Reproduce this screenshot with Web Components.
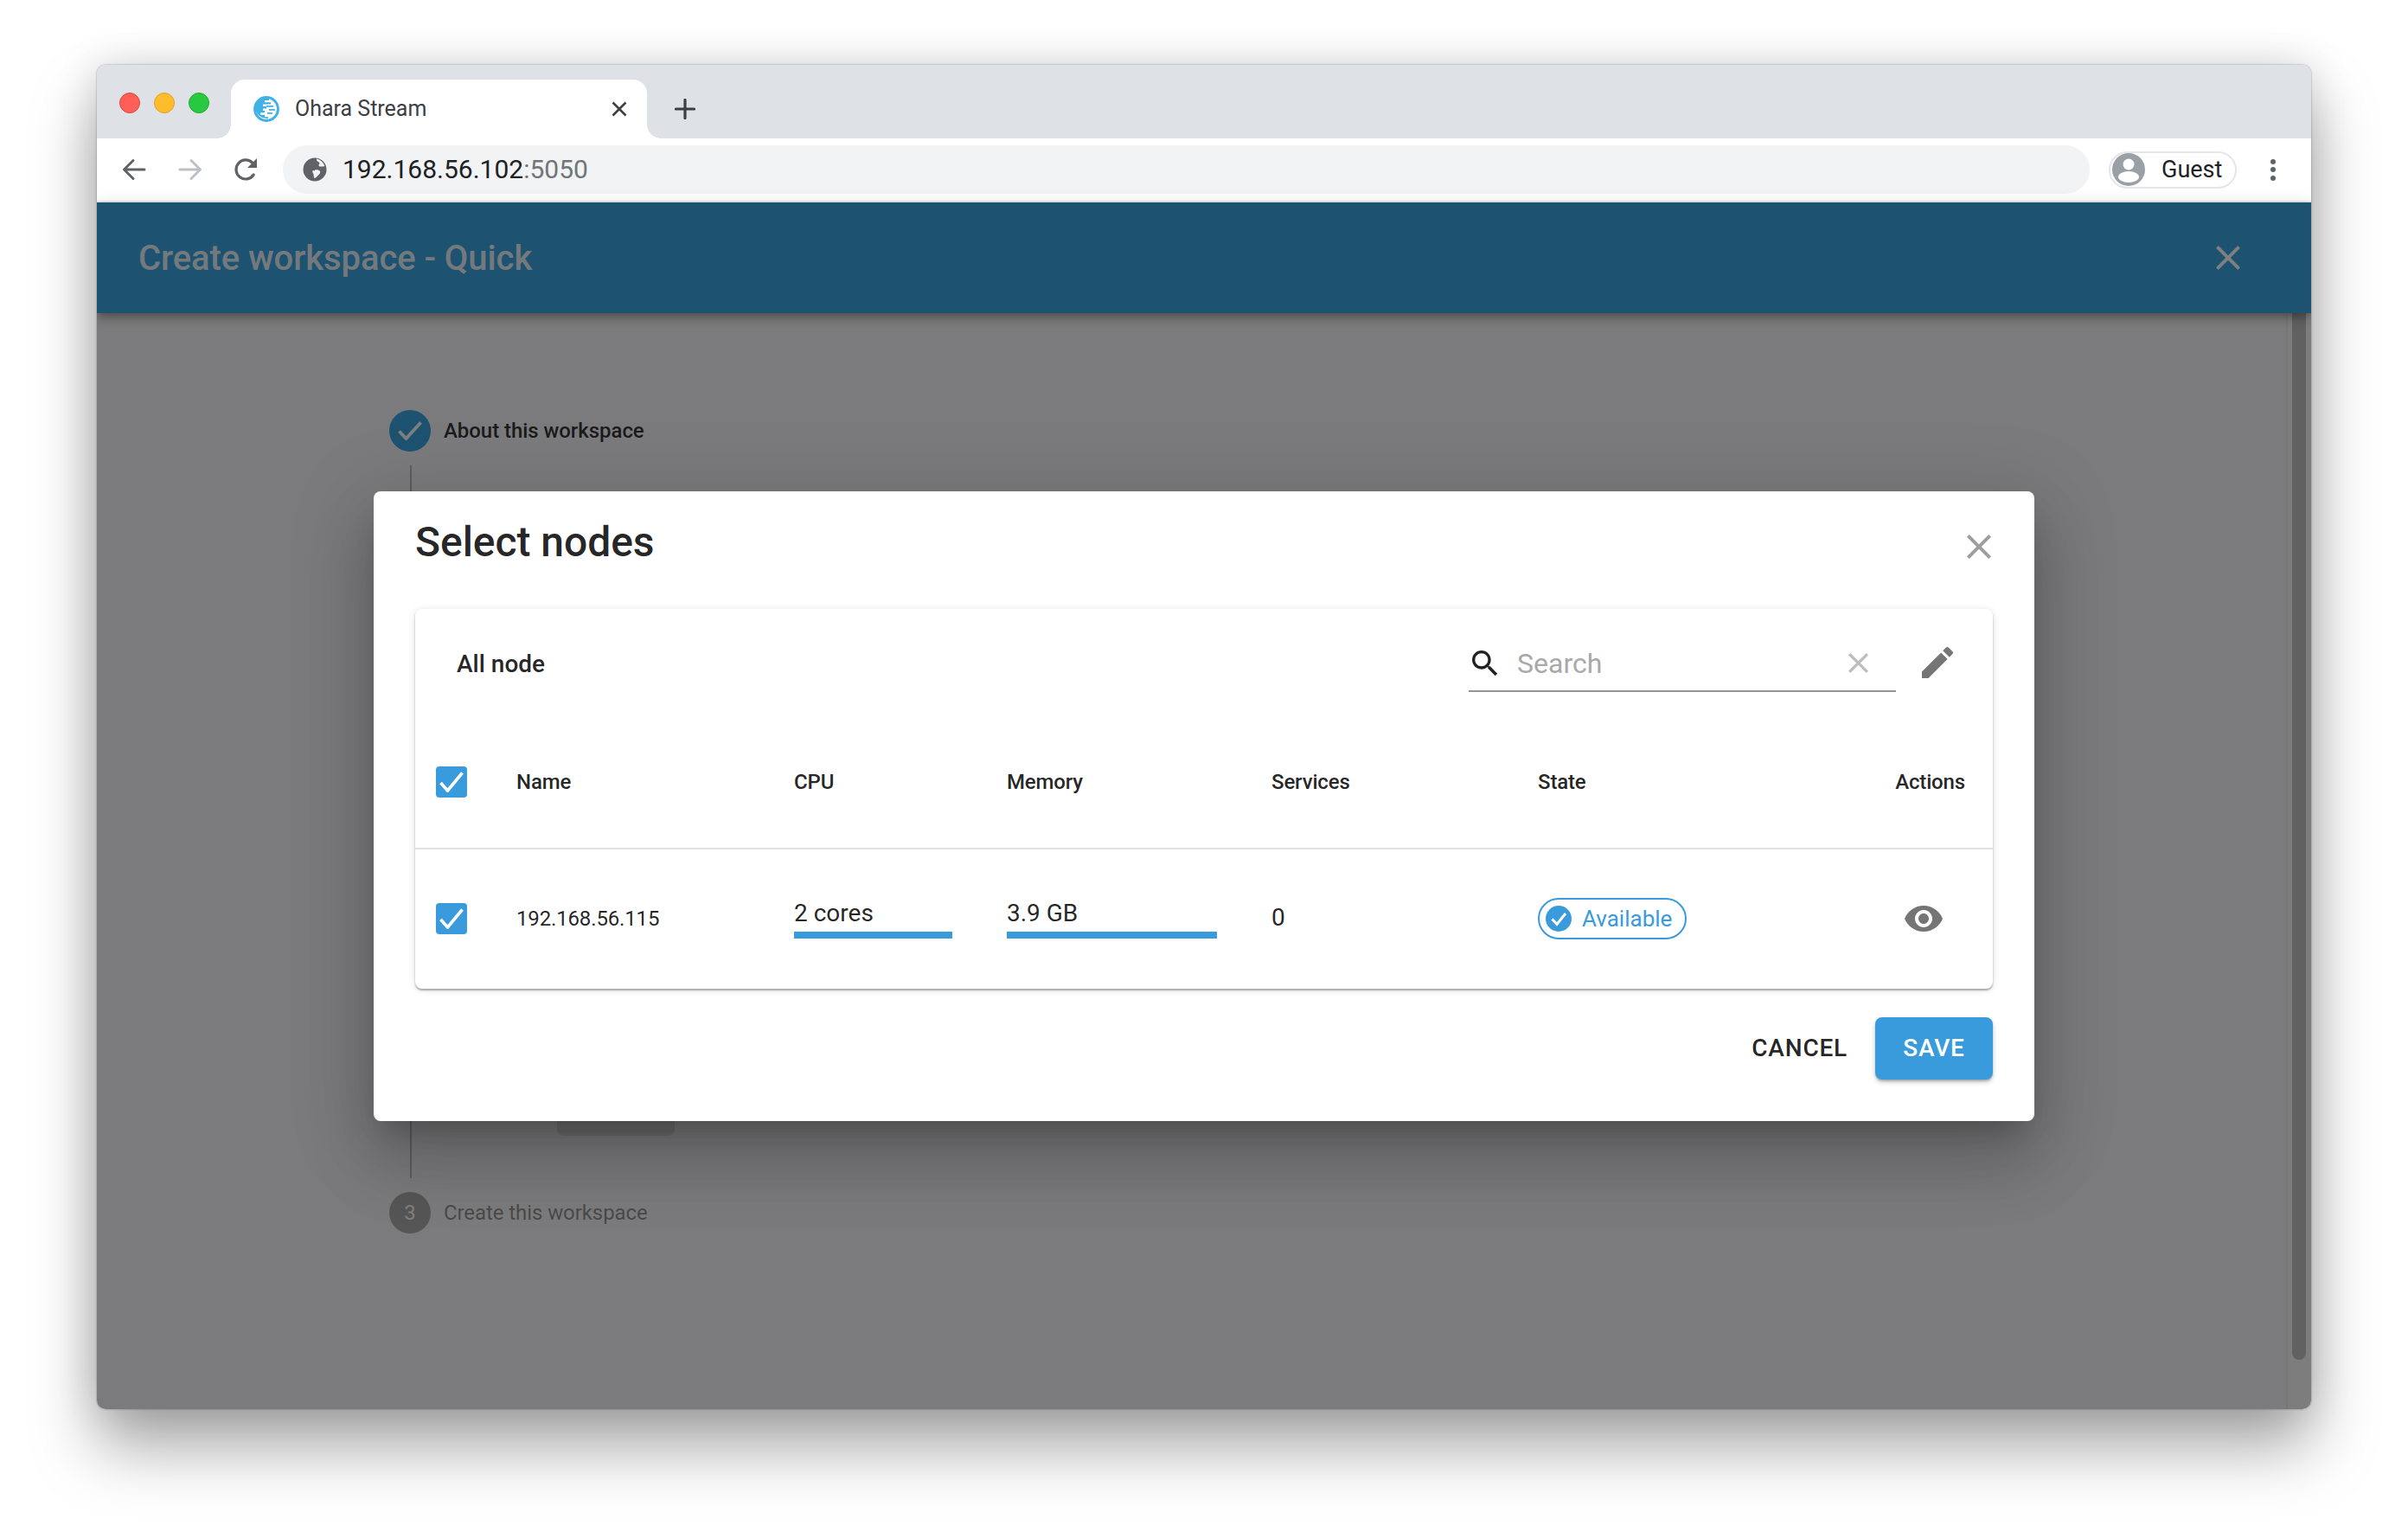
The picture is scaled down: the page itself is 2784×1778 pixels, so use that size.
<!DOCTYPE html>
<html lang="en">
<head>
<meta charset="utf-8">
<title>Ohara Stream</title>
<style>
    html, body { margin: 0; background: #fff; }
    body { padding: 75px 112px 0; height: 1778px; box-sizing: border-box; overflow: hidden; font-family: Roboto, "Liberation Sans", sans-serif; }
</style>
</head>
<body>
<mac-window>
    <tab-strip slot="tabs" label="Ohara Stream"></tab-strip>
    <url-bar slot="toolbar" host="192.168.56.102" port=":5050"></url-bar>
    <app-header heading="Create workspace - Quick"></app-header>
    <workspace-page>
        <step-item state="done" label="About this workspace"></step-item>
        <step-line></step-line>
        <step-item state="todo" number="3" label="Create this workspace"></step-item>
    </workspace-page>
    <modal-dialog slot="overlay" heading="Select nodes">
        <nodes-card>
            <table-row kind="head">
                <check-box></check-box>
                <span>Name</span>
                <span>CPU</span>
                <span>Memory</span>
                <span>Services</span>
                <span>State</span>
                <span>Actions</span>
            </table-row>
            <table-row kind="body">
                <check-box></check-box>
                <span>192.168.56.115</span>
                <usage-bar value="2 cores"></usage-bar>
                <usage-bar value="3.9 GB"></usage-bar>
                <span style="font-size:28px;margin-top:-2px">0</span>
                <state-chip label="Available"></state-chip>
                <eye-button></eye-button>
            </table-row>
        </nodes-card>
        <text-button slot="actions" label="CANCEL"></text-button>
        <text-button slot="actions" label="SAVE" primary></text-button>
    </modal-dialog>
</mac-window>

<script>
const CLOSE_PATH = 'M19 6.41L17.59 5 12 10.59 6.41 5 5 6.41 10.59 12 5 17.59 6.41 19 12 13.41 17.59 19 19 17.59 13.41 12z';

class MacWindow extends HTMLElement {
    constructor() {
        super();
        this.attachShadow({ mode: 'open' });
    }

    connectedCallback() {
        this.shadowRoot.innerHTML = `
        <style>
            :host {
                display: block;
                width: 2560px;
                height: 1554px;
                border-radius: 10px;
                box-shadow: 0 44px 76px rgba(0, 0, 0, 0.34), 0 0 50px rgba(0, 0, 0, 0.14), 0 0 2px rgba(0, 0, 0, 0.45);
            }
            .frame {
                display: flex;
                flex-direction: column;
                height: 100%;
                border-radius: 10px;
                overflow: hidden;
            }
            .view {
                position: relative;
                flex: 1;
                display: flex;
                flex-direction: column;
                min-height: 0;
            }
        </style>
        <div class="frame">
            <slot name="tabs"></slot>
            <slot name="toolbar"></slot>
            <div class="view">
                <slot></slot>
                <slot name="overlay"></slot>
            </div>
        </div>
        `;
    }
}

class TabStrip extends HTMLElement {
    constructor() {
        super();
        this.attachShadow({ mode: 'open' });
    }

    connectedCallback() {
        this.shadowRoot.innerHTML = `
        <style>
            :host {
                display: flex;
                height: 85px;
                background: #dee1e6;
                padding-left: 26px;
                box-sizing: border-box;
            }
            .lights {
                display: flex;
                gap: 16px;
                margin-top: 32px;
            }
            .lights i {
                width: 24px;
                height: 24px;
                border-radius: 50%;
                box-sizing: border-box;
            }
            .tab {
                position: relative;
                display: flex;
                align-items: center;
                width: 481px;
                height: 68px;
                margin: 17px 0 0 25px;
                padding: 0 23px 0 26px;
                box-sizing: border-box;
                background: #fff;
                border-radius: 16px 16px 0 0;
            }
            .tab::before, .tab::after {
                content: '';
                position: absolute;
                bottom: 0;
                width: 16px;
                height: 16px;
            }
            .tab::before {
                left: -16px;
                background: radial-gradient(circle at 0 0, transparent 15.5px, #fff 16px);
            }
            .tab::after {
                right: -16px;
                background: radial-gradient(circle at 100% 0, transparent 15.5px, #fff 16px);
            }
            .title {
                margin: -1px 0 0 18px;
                font-size: 25px;
                color: #3c4043;
            }
            .close {
                margin-left: auto;
            }
            .plus {
                margin: 39px 0 0 32px;
            }
        </style>
        <div class="lights">
            <i style="background:#ff5f57;border:1px solid #e2463f"></i>
            <i style="background:#ffbd2e;border:1px solid #dfa023"></i>
            <i style="background:#28c940;border:1px solid #1dad2b"></i>
        </div>
        <div class="tab">
            <svg width="30" height="30" viewBox="0 0 30 30">
                <circle cx="15" cy="15" r="13.4" fill="#fff" stroke="#3fb0e8" stroke-width="3"/>
                <path d="M2.5 15A12.5 12.5 0 0 1 15 2.5h3v2.4h-5v2.4h7v2.2h-9v2.6h4v2.4h-4v2.6h2v2.2H8v2.4h5v2.6h4v1.6H15A12.5 12.5 0 0 1 2.5 15z" fill="#3fb0e8"/>
                <path d="M15 11h8v1.7h-8zM18 15h7v1.7h-7zM16 19h6v1.7h-6z" fill="#3fb0e8"/>
            </svg>
            <span class="title">${this.getAttribute('label')}</span>
            <svg class="close" width="18" height="18" viewBox="0 0 18 18" fill="none" stroke="#3c4043" stroke-width="2.6"><path d="M1.5 1.5l15 15M16.5 1.5l-15 15"/></svg>
        </div>
        <svg class="plus" width="24" height="24" viewBox="0 0 24 24" fill="none" stroke="#3c4043" stroke-width="3.2" stroke-linecap="round"><path d="M12 1.5v21M1.5 12h21"/></svg>
        `;
    }
}

class UrlBar extends HTMLElement {
    constructor() {
        super();
        this.attachShadow({ mode: 'open' });
    }

    connectedCallback() {
        this.shadowRoot.innerHTML = `
        <style>
            :host {
                display: flex;
                align-items: center;
                height: 74px;
                padding: 0 41px 0 29px;
                box-sizing: border-box;
                background: #fff;
                border-bottom: 2px solid #e8eaed;
            }
            .nav {
                display: flex;
                align-items: center;
                flex-shrink: 0;
            }
            .omni {
                flex: 1;
                display: flex;
                align-items: center;
                height: 56px;
                margin: 0 22px 0 29px;
                padding-left: 23px;
                border-radius: 28px;
                background: #f1f3f4;
                font-size: 30px;
                color: #202124;
            }
            .omni svg { margin-right: 18px; }
            .omni > span { margin-top: -2px; }
            .port { color: #70757a; }
            .guest {
                display: flex;
                align-items: center;
                width: 148px;
                height: 43px;
                box-sizing: border-box;
                padding-left: 2px;
                border: 2px solid #e4e6e9;
                border-radius: 22px;
                font-size: 27px;
                color: #202124;
            }
            .guest span { margin-left: 19px; }
            .dots {
                display: flex;
                flex-direction: column;
                gap: 3.5px;
                margin-left: 39px;
            }
            .dots i {
                width: 6px;
                height: 6px;
                border-radius: 50%;
                background: #5f6368;
            }
        </style>
        <div class="nav">
            <svg width="28" height="26" viewBox="0 0 28 26" fill="none" stroke="#5f6368" stroke-width="3" stroke-linecap="round" stroke-linejoin="round"><path d="M26 13H3M13 2.5L2.5 13 13 23.5"/></svg>
            <svg style="margin-left:37px" width="28" height="26" viewBox="0 0 28 26" fill="none" stroke="#bdc1c6" stroke-width="3" stroke-linecap="round" stroke-linejoin="round"><path d="M2 13h23M15 2.5L25.5 13 15 23.5"/></svg>
            <svg style="margin-left:36px" width="28" height="28" viewBox="0 0 28 28"><path d="M23.2 20A11 11 0 1 1 21.8 6.2" fill="none" stroke="#5f6368" stroke-width="3.2" stroke-linecap="round"/><path d="M27 1v11H16z" fill="#5f6368"/></svg>
        </div>
        <div class="omni">
            <svg width="28" height="28" viewBox="0 0 28 28">
                <circle cx="14" cy="14" r="13.5" fill="#5f6368"/>
                <path d="M14 14.5c2-.8 5-.2 6 1.5 1 1.6-.8 3.4-2 4.6-1.2 1.3-2.6 3-4.5 3.4-1-1.6-.6-3.1-1-4.5-.5-1.7-2-2.7-1-4 .6-.8 1.5-.6 2.5 0z" fill="#f1f3f4"/>
                <path d="M16 1.5c-.5 2 .7 2.8 2 3.4 1.8.8 1.6 2.2.8 3.3-.7 1-.2 2 1 2.2 1.8.3 3.7.1 5.6-.4-1.5-4-5-7.8-9.4-8.5z" fill="#f1f3f4"/>
            </svg>
            <span>${this.getAttribute('host')}<span class="port">${this.getAttribute('port')}</span></span>
        </div>
        <div class="guest">
            <svg width="38" height="38" viewBox="0 0 38 38">
                <circle cx="19" cy="19" r="19" fill="#9aa0a6"/>
                <circle cx="19" cy="13" r="6.5" fill="#fff"/>
                <ellipse cx="19" cy="27.5" rx="12" ry="6.5" fill="#fff"/>
            </svg>
            <span>Guest</span>
        </div>
        <div class="dots"><i></i><i></i><i></i></div>
        `;
    }
}

class AppHeader extends HTMLElement {
    constructor() {
        super();
        this.attachShadow({ mode: 'open' });
    }

    connectedCallback() {
        this.shadowRoot.innerHTML = `
        <style>
            :host {
                position: relative;
                z-index: 1;
                display: flex;
                align-items: center;
                justify-content: space-between;
                flex-shrink: 0;
                height: 128px;
                padding: 0 82px 0 48px;
                background: #3ba4e2;
                box-shadow: 0 4px 8px -2px rgba(0,0,0,0.2), 0 8px 10px rgba(0,0,0,0.14), 0 2px 20px rgba(0,0,0,0.12);
            }
            h1 {
                margin: 0;
                font-size: 40px;
                font-weight: 500;
                letter-spacing: -0.08px;
                color: rgba(255, 255, 255, 0.9);
            }
        </style>
        <h1>${this.getAttribute('heading')}</h1>
        <svg width="28" height="28" viewBox="5 5 14 14" fill="#fff"><path d="${CLOSE_PATH}"/></svg>
        `;
    }
}

class WorkspacePage extends HTMLElement {
    constructor() {
        super();
        this.attachShadow({ mode: 'open' });
    }

    connectedCallback() {
        this.shadowRoot.innerHTML = `
        <style>
            :host {
                flex: 1;
                display: flex;
                min-height: 0;
                background: #f7f7fa;
            }
            .steps {
                flex: 1;
                padding: 112px 0 0 338px;
            }
            .track {
                width: 29px;
                box-sizing: border-box;
                padding: 0 6px 0 5px;
                border-left: 2px solid #ececef;
                background: #fbfbfb;
            }
            .thumb {
                height: 1210px;
                border-radius: 0 0 8px 8px;
                background: #c2c2c2;
            }
        </style>
        <div class="steps"><slot></slot></div>
        <div class="track"><div class="thumb"></div></div>
        `;
    }
}

class StepItem extends HTMLElement {
    constructor() {
        super();
        this.attachShadow({ mode: 'open' });
    }

    connectedCallback() {
        const done = this.getAttribute('state') === 'done';
        const badge = done
            ? `<svg width="28" height="22" viewBox="0 0 28 22" fill="none" stroke="#fff" stroke-width="3.8"><path d="M1.5 11.5l8 8.5L26.5 1.5"/></svg>`
            : `<span>${this.getAttribute('number')}</span>`;
        this.shadowRoot.innerHTML = `
        <style>
            :host {
                display: flex;
                align-items: center;
                gap: 16px;
                height: 48px;
                font-size: 24px;
                font-weight: ${done ? 500 : 400};
                letter-spacing: ${done ? '-0.05px' : '-0.08px'};
                color: ${done ? 'rgba(0,0,0,0.8)' : 'rgba(0,0,0,0.42)'};
            }
            .badge {
                display: flex;
                align-items: center;
                justify-content: center;
                width: 48px;
                height: 48px;
                border-radius: 50%;
                background: ${done ? '#3ba4e2' : '#acacac'};
                color: #fff;
                font-weight: 400;
            }
            .text { margin-left: -1px; }
        </style>
        <div class="badge">${badge}</div>
        <span class="text">${this.getAttribute('label')}</span>
        `;
    }
}

class StepLine extends HTMLElement {
    constructor() {
        super();
        this.attachShadow({ mode: 'open' });
    }

    connectedCallback() {
        this.shadowRoot.innerHTML = `
        <style>
            :host {
                display: flex;
                align-items: flex-end;
                height: 824px;
                margin: 16px 0 16px 24px;
                box-sizing: border-box;
                padding-bottom: 49px;
                border-left: 2px solid #bdbdbd;
            }
            .btn {
                width: 136px;
                height: 72px;
                margin-left: 168px;
                border-radius: 8px;
                background: #dedede;
            }
        </style>
        <div class="btn"></div>
        `;
    }
}

class ModalDialog extends HTMLElement {
    constructor() {
        super();
        this.attachShadow({ mode: 'open' });
    }

    connectedCallback() {
        this.shadowRoot.innerHTML = `
        <style>
            :host {
                position: absolute;
                inset: 0;
                z-index: 2;
                display: flex;
                align-items: center;
                justify-content: center;
                background: rgba(0, 0, 0, 0.5);
            }
            .panel {
                width: 1920px;
                height: 728px;
                box-sizing: border-box;
                padding: 32px 48px 48px;
                border-radius: 8px;
                background: #fff;
                box-shadow: 0 22px 30px -14px rgba(0,0,0,0.2), 0 48px 76px 6px rgba(0,0,0,0.14), 0 18px 92px 16px rgba(0,0,0,0.12);
            }
            .head {
                display: flex;
                justify-content: space-between;
                height: 54px;
                margin-bottom: 50px;
            }
            h2 {
                margin: 0;
                font-size: 48px;
                line-height: 54px;
                font-weight: 500;
                letter-spacing: -0.05px;
                color: rgba(0, 0, 0, 0.87);
            }
            .head svg {
                margin: 18px 2px 0 0;
            }
            .actions {
                display: flex;
                justify-content: flex-end;
                gap: 32px;
                margin-top: 33px;
            }
        </style>
        <div class="panel">
            <div class="head">
                <h2>${this.getAttribute('heading')}</h2>
                <svg width="28" height="28" viewBox="5 5 14 14" fill="#9e9e9e"><path d="${CLOSE_PATH}"/></svg>
            </div>
            <slot></slot>
            <div class="actions"><slot name="actions"></slot></div>
        </div>
        `;
    }
}

class NodesCard extends HTMLElement {
    constructor() {
        super();
        this.attachShadow({ mode: 'open' });
    }

    connectedCallback() {
        this.shadowRoot.innerHTML = `
        <style>
            :host {
                display: block;
                height: 439px;
                border-radius: 8px;
                background: #fff;
                box-shadow: 0 2px 2px rgba(0,0,0,0.3), 0 1px 10px rgba(0,0,0,0.12);
            }
            .bar {
                display: flex;
                align-items: center;
                height: 125px;
                padding: 0 40px 0 48px;
            }
            .name {
                flex: 1;
                padding-top: 2px;
                font-size: 28px;
                font-weight: 500;
                color: rgba(0, 0, 0, 0.87);
            }
            .search {
                display: flex;
                align-items: center;
                width: 494px;
                height: 64px;
                margin: 3px 24px 0 0;
                box-sizing: border-box;
                padding: 0 32px 0 0;
                border-bottom: 2px solid #949494;
            }
            .search .lens { margin-left: -1px; }
            .search span {
                flex: 1;
                margin-left: 17px;
                font-size: 32px;
                color: #a9a9a9;
            }
        </style>
        <div class="bar">
            <span class="name">All node</span>
            <div class="search">
                <svg class="lens" width="40" height="40" viewBox="0 0 24 24" fill="#212121"><path d="M15.5 14h-.79l-.28-.27C15.41 12.59 16 11.11 16 9.5 16 5.91 13.09 3 9.5 3S3 5.91 3 9.5 5.91 16 9.5 16c1.61 0 3.09-.59 4.23-1.57l.27.28v.79l5 4.99L20.49 19l-4.99-5zm-6 0C7.01 14 5 11.99 5 9.5S7.01 5 9.5 5 14 7.01 14 9.5 11.99 14 9.5 14z"/></svg>
                <span>Search</span>
                <svg width="23" height="23" viewBox="5 5 14 14" fill="#bdbdbd"><path d="${CLOSE_PATH}"/></svg>
            </div>
            <svg width="48" height="48" viewBox="0 0 24 24" fill="#757575"><path d="M3 17.25V21h3.75L17.81 9.94l-3.75-3.75L3 17.25zM20.71 7.04c.39-.39.39-1.02 0-1.41l-2.34-2.34c-.39-.39-1.02-.39-1.41 0l-1.83 1.83 3.75 3.75 1.83-1.83z"/></svg>
        </div>
        <slot></slot>
        `;
    }
}

class TableRow extends HTMLElement {
    constructor() {
        super();
        this.attachShadow({ mode: 'open' });
    }

    connectedCallback() {
        const head = this.getAttribute('kind') === 'head';
        this.shadowRoot.innerHTML = `
        <style>
            :host {
                display: grid;
                grid-template-columns: 93px 321px 246px 306px 308px 1fr auto;
                align-items: center;
                height: ${head ? '151px' : '160px'};
                padding: 0 32px 0 24px;
                font-size: 24px;
                font-weight: ${head ? 500 : 400};
                letter-spacing: -0.15px;
                color: rgba(0, 0, 0, 0.87);
                ${head ? 'border-bottom: 2px solid #e0e0e0;' : ''}
            }
        </style>
        <slot></slot>
        `;
    }
}

class CheckBox extends HTMLElement {
    constructor() {
        super();
        this.attachShadow({ mode: 'open' });
    }

    connectedCallback() {
        this.shadowRoot.innerHTML = `
        <style>
            :host {
                display: flex;
                align-items: center;
                justify-content: center;
                width: 36px;
                height: 36px;
                border-radius: 4px;
                background: #3a9bdc;
            }
        </style>
        <svg width="28" height="24" viewBox="0 0 28 24" fill="none" stroke="#fff" stroke-width="3.6"><path d="M1.5 13l8 9L26.5 1.5"/></svg>
        `;
    }
}

class UsageBar extends HTMLElement {
    constructor() {
        super();
        this.attachShadow({ mode: 'open' });
    }

    connectedCallback() {
        this.shadowRoot.innerHTML = `
        <style>
            :host {
                display: block;
                margin: 2px 63px 0 0;
                font-size: 28px;
                line-height: 32px;
                letter-spacing: 0;
            }
            .fill {
                height: 8px;
                margin-top: 5px;
                background: #3a9bdc;
            }
        </style>
        <div>${this.getAttribute('value')}</div>
        <div class="fill"></div>
        `;
    }
}

class StateChip extends HTMLElement {
    constructor() {
        super();
        this.attachShadow({ mode: 'open' });
    }

    connectedCallback() {
        this.shadowRoot.innerHTML = `
        <style>
            :host {
                display: flex;
                align-items: center;
                gap: 12px;
                width: 172px;
                height: 48px;
                box-sizing: border-box;
                padding-left: 7px;
                border: 2px solid #3a9bdc;
                border-radius: 24px;
                font-size: 26px;
                letter-spacing: 0;
                color: #3a9bdc;
            }
        </style>
        <svg width="30" height="30" viewBox="0 0 30 30"><circle cx="15" cy="15" r="15" fill="#3a9bdc"/><path d="M7.5 15.5l5.5 6L23 9" fill="none" stroke="#fff" stroke-width="3"/></svg>
        <span>${this.getAttribute('label')}</span>
        `;
    }
}

class EyeButton extends HTMLElement {
    constructor() {
        super();
        this.attachShadow({ mode: 'open' });
    }

    connectedCallback() {
        this.shadowRoot.innerHTML = `
        <style>
            :host {
                display: block;
                width: 48px;
                height: 48px;
                margin-right: 24px;
            }
        </style>
        <svg width="48" height="48" viewBox="0 0 24 24" fill="#757575"><path d="M12 4.5C7 4.5 2.73 7.61 1 12c1.73 4.39 6 7.5 11 7.5s9.27-3.11 11-7.5c-1.73-4.39-6-7.5-11-7.5zM12 17c-2.76 0-5-2.24-5-5s2.24-5 5-5 5 2.24 5 5-2.24 5-5 5zm0-8c-1.66 0-3 1.34-3 3s1.34 3 3 3 3-1.34 3-3-1.34-3-3-3z"/></svg>
        `;
    }
}

class TextButton extends HTMLElement {
    constructor() {
        super();
        this.attachShadow({ mode: 'open' });
    }

    connectedCallback() {
        const primary = this.hasAttribute('primary');
        this.shadowRoot.innerHTML = `
        <style>
            :host {
                display: flex;
                align-items: center;
                justify-content: center;
                height: 72px;
                ${primary ? 'width: 136px;' : ''}
                border-radius: 8px;
                font-size: 28px;
                font-weight: 500;
                letter-spacing: 0.8px;
                color: ${primary ? '#fff' : 'rgba(0,0,0,0.87)'};
                ${primary ? 'background: #3a9bdc; box-shadow: 0 2px 2px rgba(0,0,0,0.14), 0 3px 6px -1px rgba(0,0,0,0.3);' : ''}
            }
        </style>
        <span>${this.getAttribute('label')}</span>
        `;
    }
}

customElements.define('mac-window', MacWindow);
customElements.define('tab-strip', TabStrip);
customElements.define('url-bar', UrlBar);
customElements.define('app-header', AppHeader);
customElements.define('workspace-page', WorkspacePage);
customElements.define('step-item', StepItem);
customElements.define('step-line', StepLine);
customElements.define('modal-dialog', ModalDialog);
customElements.define('nodes-card', NodesCard);
customElements.define('table-row', TableRow);
customElements.define('check-box', CheckBox);
customElements.define('usage-bar', UsageBar);
customElements.define('state-chip', StateChip);
customElements.define('eye-button', EyeButton);
customElements.define('text-button', TextButton);
</script>
</body>
</html>
